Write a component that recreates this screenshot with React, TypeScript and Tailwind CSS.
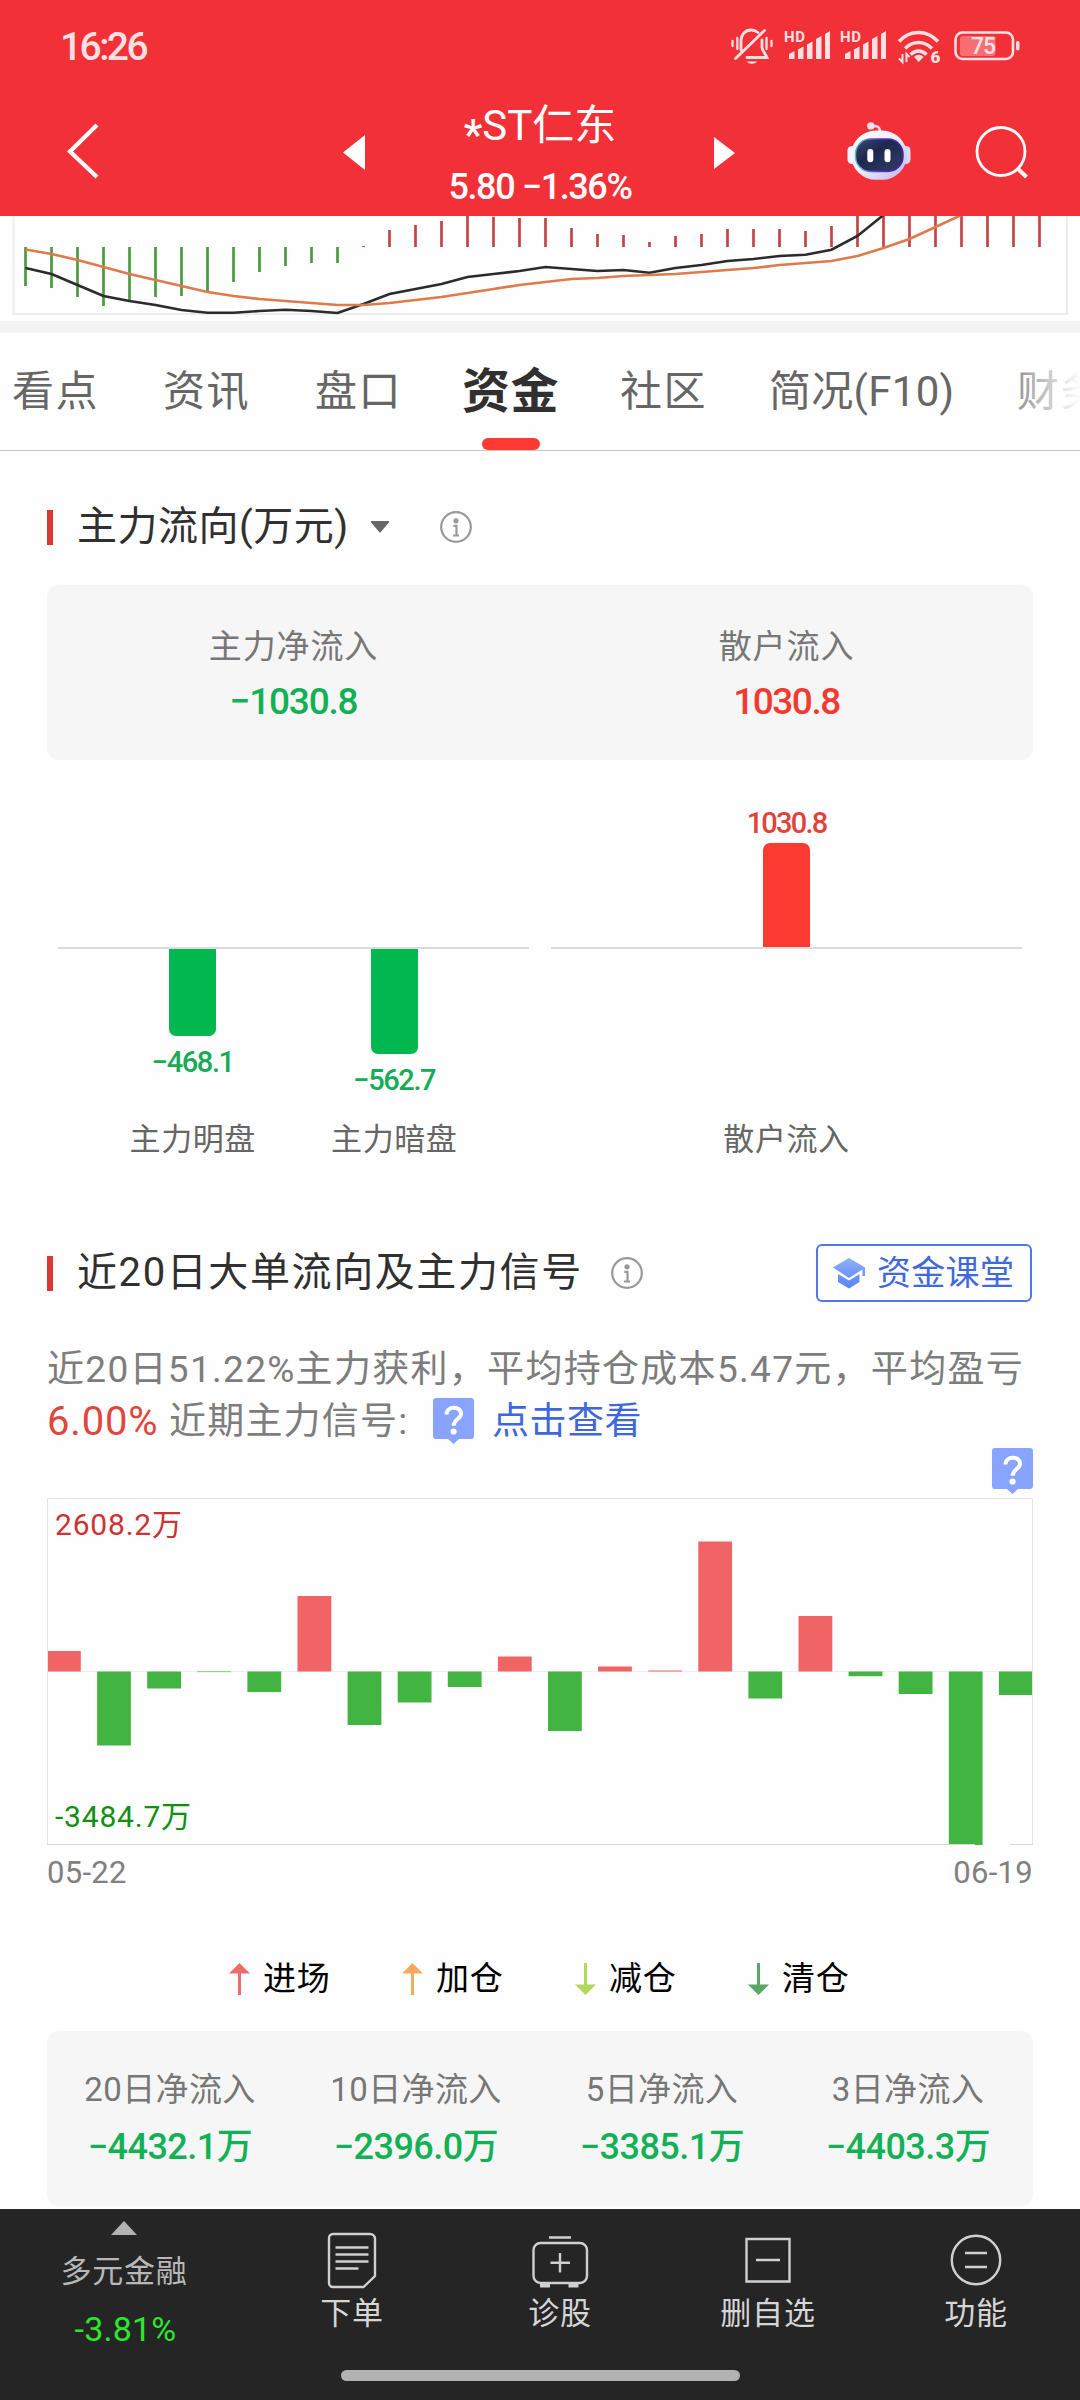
import type { ReactNode } from 'react';

// MACD histogram, zero line at y = 31 of the visible strip
const macdEnds = [
  70, 72, 81, 90, 84, 81, 80, 75, 66, 56, 50, 47, 47, 30, 14, 9, 5, 0, 0.7, 2,
  2, 12, 18, 19, 26, 20, 18, 13, 13, 13, 15, 10, 0, 0, 0, 0, 0, 0, 0, 0,
];
const difLine = [
  52, 58, 69, 80, 85, 89, 94, 96.7, 96.7, 95, 93.7, 95, 97, 88, 78, 73, 68, 61, 58, 55,
  51, 53, 55, 54, 56.7, 52, 49, 45, 43, 40, 38.7, 33.7, 20, -1,
];
const deaLine = [
  33.5, 38, 44, 51, 58, 64, 70, 76, 80, 83, 85, 87, 89, 89, 87, 84, 81, 77, 73, 69,
  66, 63, 62, 60, 59, 58, 56, 54, 52, 49, 47, 45, 40, 32, 23, 11, -1,
];

const macdX = (i: number) => 25.5 + i * 26;
const toPoints = (ys: number[]) => ys.map((y, i) => `${macdX(i)},${y}`).join(' ');

// bar heights in px, positive = inflow
const dailyFlow = [
  20.5, -74, -17, -0.6, -20.5, 75.5, -53.5, -31, -15.5, 15, -59.5, 5, 1, 130, -27, 55.5, -4.7, -22.5, -173.5, -23.5,
];

const summary = [
  { label: '20日净流入', value: '−4432.1' },
  { label: '10日净流入', value: '−2396.0' },
  { label: '5日净流入', value: '−3385.1' },
  { label: '3日净流入', value: '−4403.3' },
];

const legend = [
  { label: '进场', color: '#ee6b6b', up: true },
  { label: '加仓', color: '#f9a95f', up: true },
  { label: '减仓', color: '#b0d95a', up: false },
  { label: '清仓', color: '#5aa765', up: false },
];

function SignalBars() {
  return (
    <svg className="overflow-visible" width="46" height="30" viewBox="0 0 46 30" fill="#fde0e1">
      <text x="0" y="12" fontSize="15" fontWeight="700" fontFamily="Roboto, sans-serif" textLength="21">HD</text>
      <path d="M5 29v-5l5.5-3v8zM14 29V19.500l5.500-3V29zM23 29V14.500l5.500-3V29zM32 29V9l5.500-3v23zM41 29V4l5-3v28z" />
    </svg>
  );
}

function StatusBar() {
  return (
    <div className="flex h-[84px] items-start pl-[60px] pr-[60px] pt-[28px] text-[#fde0e1]">
      <span className="mr-auto mt-[-2px] text-[39px] font-medium leading-[42px] tracking-[-2.6px]">16:26</span>
      <svg className="mr-[11px]" width="42" height="37" viewBox="0 0 42 37" fill="none" stroke="#fde0e1" strokeWidth="2.8" strokeLinecap="round">
        <path d="M4.500 30.500 33.500 2.500M10 22v-8C10 6 14.500 2 20 2c3 0 5 1 7 2.500M31 12v7c0 4 2.500 5 5 10.500H16" />
        <path d="M1.500 13v5M6.300 10v11M35.500 10v11M40.500 13v5" strokeWidth="2.300" />
        <path d="M16 33.500h10c-1.500 3-8.500 3-10 0z" fill="#fde0e1" stroke="none" />
      </svg>
      <div className="mt-[2px]"><SignalBars /></div>
      <div className="ml-[10px] mt-[2px]"><SignalBars /></div>
      <svg className="ml-[12px] mt-[2px] overflow-visible" width="45" height="34" viewBox="0 0 45 34" fill="none" stroke="#fde0e1" strokeWidth="3.600">
        <path d="M1 11.500C12-.5 29-.5 40 11.500M7 18.500c8-8 19-8 27 0M12.500 24.500c5-4.500 11-4.500 16 0" />
        <path d="M16 27c3-3 6.500-3 9.500 0l-4.700 5z" fill="#fde0e1" stroke="none" />
        <path d="M4.500 24v8L1 28.500M8.500 32v-8l3 3" strokeWidth="2" />
        <text x="32.500" y="33" fontSize="17" fontWeight="900" fill="#fde0e1" stroke="none" fontFamily="Roboto, sans-serif">6</text>
      </svg>
      <svg className="ml-[11px] mt-[3px]" width="66" height="30" viewBox="0 0 66 30">
        <rect x="1.500" y="1.500" width="57.500" height="26.500" rx="7" fill="none" stroke="#fde0e1" strokeWidth="2.600" />
        <rect x="6" y="5" width="35.500" height="20" rx="3" fill="#f76e73" />
        <rect x="62" y="10" width="3.500" height="9.500" rx="1.700" fill="#fde0e1" />
        <text x="17" y="23" fontSize="23" fontWeight="500" fill="#fde0e1" fontFamily="Roboto, sans-serif" textLength="25">75</text>
      </svg>
    </div>
  );
}

function Robot() {
  return (
    <svg width="64" height="58" viewBox="0 0 64 58">
      <defs>
        <linearGradient id="robotHead" x1="0" y1="0" x2="1" y2="1">
          <stop offset="0" stopColor="#ffffff" />
          <stop offset="0.45" stopColor="#f1effc" />
          <stop offset="1" stopColor="#b9b4ee" />
        </linearGradient>
        <linearGradient id="robotFace" x1="0" y1="0" x2="1" y2="1">
          <stop offset="0" stopColor="#3c4a73" />
          <stop offset="0.4" stopColor="#1d2750" />
          <stop offset="1" stopColor="#363d63" />
        </linearGradient>
        <linearGradient id="robotRim" x1="0" y1="0" x2="1" y2="0">
          <stop offset="0" stopColor="#5fb9c8" />
          <stop offset="0.5" stopColor="#5a2fd0" />
          <stop offset="1" stopColor="#3a22b0" />
        </linearGradient>
      </defs>
      <path d="M24 4.500c6-1.500 9 .5 9 5" fill="none" stroke="#e3dcf6" strokeWidth="2.400" />
      <circle cx="23.800" cy="3.900" r="3.700" fill="#f1dff0" />
      <rect x="0.500" y="24" width="9" height="18" rx="4.500" fill="#f7f4fd" />
      <rect x="54.500" y="24" width="9" height="18" rx="4.500" fill="#dcd7f5" />
      <rect x="4" y="8.500" width="56" height="49.300" rx="25" fill="url(#robotHead)" />
      <rect x="8.500" y="17" width="47.500" height="32.500" rx="15" fill="url(#robotFace)" stroke="url(#robotRim)" strokeWidth="1.400" />
      <rect x="20.300" y="27" width="6" height="13.300" rx="3" fill="#fff" />
      <rect x="37.500" y="27" width="6" height="13.300" rx="3" fill="#fff" />
    </svg>
  );
}

function NavBar() {
  return (
    <div className="flex h-[132px] items-start text-white">
      <svg className="ml-[66px] mt-[38px]" width="34" height="58" viewBox="0 0 34 58">
        <path d="M31 3 4 29.500 31 55" fill="none" stroke="#fff" strokeWidth="4.200" />
      </svg>
      <svg className="ml-[243px] mt-[51px]" width="22" height="35" viewBox="0 0 22 35" fill="#fff">
        <path d="M22 0v35L0 17.500z" />
      </svg>
      <div className="ml-[53px] flex w-[244px] flex-col items-center">
        <div className="mt-[16px] whitespace-nowrap text-[42px] leading-[52px]">
          <span className="inline-block translate-y-[9px] font-medium">*</span>ST仁东
        </div>
        <div className="mt-[9px] whitespace-nowrap text-[36px] font-medium leading-[52px] tracking-[-1.4px]">5.80 −1.36%</div>
      </div>
      <svg className="ml-[52px] mt-[53px]" width="21" height="32" viewBox="0 0 21 32" fill="#fff">
        <path d="M0 0v32l21-16z" />
      </svg>
      <div className="ml-[112px] mt-[38px]"><Robot /></div>
      <svg className="ml-[64px] mt-[41px]" width="54" height="54" viewBox="0 0 54 54" fill="none" stroke="#fff" strokeWidth="2.800">
        <circle cx="26" cy="26.500" r="24" />
        <path d="m42.500 43.500 9 8.500" strokeWidth="4" />
      </svg>
    </div>
  );
}

function MacdStrip() {
  return (
    <svg className="block" width="1080" height="105" viewBox="0 0 1080 105" fill="none">
      <path d="M13.500 0v98H1067V0" stroke="#ececec" strokeWidth="2" />
      {macdEnds.map((y, i) => (
        <path key={i} d={`M${macdX(i)} 31V${y}`} stroke={i < 13 ? '#4c9a3f' : '#c24447'} strokeWidth="2.700" />
      ))}
      <polyline points={toPoints(difLine)} stroke="#2b2b2b" strokeWidth="2.600" />
      <polyline points={toPoints(deaLine)} stroke="#df7a4c" strokeWidth="2.700" />
    </svg>
  );
}

function Tabs() {
  return (
    <div className="relative h-[118px] overflow-hidden border-b border-[#c8c8c8]">
      <div className="flex h-[117px] items-center whitespace-nowrap pl-[12px] text-[42px] tracking-[1.6px] text-[#666] *:shrink-0">
        <span className="w-[151px]">看点</span>
        <span className="w-[152px]">资讯</span>
        <span className="w-[147px]">盘口</span>
        <span className="w-[158px] text-[48px] font-bold tracking-[0.500px] text-[#303030]">资金</span>
        <span className="w-[149px]">社区</span>
        <span className="w-[248px] tracking-[0.300px]">简况(F10)</span>
        <span>财务</span>
      </div>
      <div className="absolute bottom-0 left-[482px] h-[12px] w-[58px] rounded-full bg-[#fc3a32]" />
      <div className="absolute right-0 top-0 h-[116px] w-[72px] bg-linear-to-r from-white/20 to-white" />
    </div>
  );
}

function InfoIcon() {
  return (
    <svg width="32" height="32" viewBox="0 0 32 32" fill="none" stroke="#999" strokeWidth="2.200">
      <circle cx="16" cy="16" r="14.800" />
      <circle cx="16" cy="9.800" r="2.600" fill="#999" stroke="none" />
      <path d="M13.300 14.800h3.200v9.500M13 24.500h6" />
    </svg>
  );
}

function SectionTitle({ children }: { children: ReactNode }) {
  return (
    <>
      <div className="h-[35px] w-[6px] bg-[#d93636]" />
      <h2 className="ml-[24px] whitespace-nowrap text-[40px] leading-[58px] text-[#303030]">{children}</h2>
    </>
  );
}

function FlowColumn({ value, label, height, width }: { value: string; label: string; height: number; width: string }) {
  const inflow = height > 0;
  return (
    <div className={`flex flex-col items-center ${width}`}>
      <div className="flex h-[187px] flex-col items-center justify-end">
        {inflow && (
          <>
            <span className="mb-[3px] text-[29px] font-medium leading-[34px] tracking-[-1.800px] text-[#e0433a]">{value}</span>
            <div className="w-[47px] rounded-t-[7px] bg-[#fc3a32]" style={{ height }} />
          </>
        )}
      </div>
      <div className="flex h-[174px] flex-col items-center pt-[2px]">
        {!inflow && (
          <>
            <div className="w-[47px] rounded-b-[7px] bg-[#00b750]" style={{ height: -height }} />
            <span className="mt-[9px] text-[29px] font-medium leading-[34px] tracking-[-1.400px] text-[#16ab56]">{value}</span>
          </>
        )}
      </div>
      <span className="whitespace-nowrap text-[31px] leading-[38px] tracking-[0.600px] text-[#666]">{label}</span>
    </div>
  );
}

function QuestionBadge() {
  return (
    <svg width="41" height="46" viewBox="0 0 41 46">
      <path d="M3 0h35a3 3 0 0 1 3 3v35a3 3 0 0 1-3 3H26l-5.500 5-5.500-5H3a3 3 0 0 1-3-3V3a3 3 0 0 1 3-3z" fill="#88a4ff" />
      <path d="M13.500 16.500c0-9 14.500-9 14.500-.8 0 5.500-7.300 5.300-7.300 12" fill="none" stroke="#fff" strokeWidth="4" />
      <circle cx="20.600" cy="33.500" r="3.100" fill="#fff" />
    </svg>
  );
}

function DailyFlowChart() {
  return (
    <div className="relative">
      <svg className="block" width="986" height="347" viewBox="0 0 986 347">
        <path d="M0 173.500h986" stroke="#eee" />
        {dailyFlow.map((v, i) => (
          <rect
            key={i}
            x={i * 50.1}
            y={v > 0 ? 173.500 - v : 173.500}
            width="33.800"
            height={Math.abs(v)}
            fill={v > 0 ? '#f06466' : '#42b442'}
          />
        ))}
        <path d="M.5 347V.5h985V347" fill="none" stroke="#e6e6e6" />
        <path d="M0 346.500h928M963 346.500h23" stroke="#d6d6d6" />
      </svg>
      <span className="absolute left-[8px] top-[10px] text-[30px] leading-[34px] tracking-[0.800px] text-[#cc3333]">2608.2万</span>
      <span className="absolute bottom-[11px] left-[8px] text-[30px] leading-[34px] tracking-[0.800px] text-[#108f10]">-3484.7万</span>
    </div>
  );
}

function TabItem({ label, children }: { label: string; children: ReactNode }) {
  return (
    <div className="flex w-[208px] flex-col items-center">
      <svg className="mt-[22px]" width="60" height="60" viewBox="0 0 60 60" fill="none" stroke="#d0d0d0" strokeWidth="2.400">
        {children}
      </svg>
      <span className="mt-[3px] text-[31px] leading-[40px] tracking-[0.800px] text-[#d6d6d6]">{label}</span>
    </div>
  );
}

function BottomBar() {
  return (
    <div className="h-[191px] bg-[#252525]">
      <div className="flex h-[161px]">
        <div className="flex w-[248px] flex-col items-center">
          <svg className="mt-[12px]" width="26" height="14" viewBox="0 0 26 14" fill="#b2b2b2">
            <path d="M13 0 26 14H0z" />
          </svg>
          <span className="mt-[17px] text-[31px] leading-[40px] tracking-[0.800px] text-[#b8b8b8]">多元金融</span>
          <span className="mt-[17px] pl-[3px] text-[34px] leading-[40px] tracking-[0.200px] text-[#2fe62f]">-3.81%</span>
        </div>
        <TabItem label="下单">
          <path d="M11 3h37a5 5 0 0 1 5 5v37L41.500 56H11a4 4 0 0 1-4-4V7a4 4 0 0 1 4-4z" />
          <path d="M13.500 16.500h33M13.500 23.500h33M13.500 30.500h33M13.500 37.500h23" />
        </TabItem>
        <TabItem label="诊股">
          <rect x="3.500" y="12" width="53.500" height="40" rx="7" />
          <path d="M19 6.500h22M30 22v19.500M20.500 31.800h19.500" />
          <path d="M10 54.500h10M38.500 54.500h10" strokeWidth="4" />
        </TabItem>
        <TabItem label="删自选">
          <path d="M8.500 8h43v42.500h-43zM18 29h24" />
        </TabItem>
        <TabItem label="功能">
          <circle cx="30" cy="29" r="24.200" />
          <path d="M19 22h22M19 36h22" />
        </TabItem>
      </div>
      <div className="mx-auto h-[11px] w-[399px] rounded-full bg-[#b2b2b2]" />
    </div>
  );
}

export default function App() {
  return (
    <div className="flex h-[2400px] w-[1080px] flex-col overflow-hidden bg-[#fefefe] font-[Roboto,'Noto_Sans_CJK_SC',sans-serif]">
      <header className="bg-[#f23038]">
        <StatusBar />
        <NavBar />
      </header>
      <MacdStrip />
      <div className="h-[12px] bg-[#f4f4f4]" />
      <Tabs />

      <main className="flex h-[1758px] flex-col px-[47px]">
        <div className="mt-[46px] flex h-[60px] items-center tracking-[0.500px]">
          <SectionTitle>主力流向(万元)</SectionTitle>
          <svg className="ml-[21px]" width="20" height="12" viewBox="0 0 20 12">
            <path d="M1.500.8h17L10 10.700z" fill="#666" stroke="#666" strokeWidth="1.500" strokeLinejoin="round" />
          </svg>
          <div className="ml-[50px]"><InfoIcon /></div>
        </div>

        <div className="mt-[28px] flex h-[175px] rounded-[12px] bg-[#f6f6f6] pt-[38px] text-center">
          <div className="flex-1">
            <div className="text-[33px] leading-[48px] tracking-[0.900px] text-[#777]">主力净流入</div>
            <div className="mt-[5px] text-[37px] font-medium leading-[52px] tracking-[-1.200px] text-[#12b155]">−1030.8</div>
          </div>
          <div className="flex-1">
            <div className="text-[33px] leading-[48px] tracking-[0.900px] text-[#777]">散户流入</div>
            <div className="mt-[5px] text-[37px] font-medium leading-[52px] tracking-[-1.500px] text-[#f23a32]">1030.8</div>
          </div>
        </div>

        {/* net flow split: main force on the left, retail on the right */}
        <div className="flex h-[452px] gap-[22px] px-[11px]">
          <div className="w-[471px]">
            <div className="flex bg-[linear-gradient(#dcdcdc,#dcdcdc)] bg-[length:100%_2px] bg-[position:0_187px] bg-no-repeat px-[34px]">
              <FlowColumn value="−468.1" label="主力明盘" height={-87} width="w-[202px]" />
              <FlowColumn value="−562.7" label="主力暗盘" height={-105} width="w-[202px]" />
            </div>
          </div>
          <div className="w-[471px]">
            <div className="flex bg-[linear-gradient(#dcdcdc,#dcdcdc)] bg-[length:100%_2px] bg-[position:0_187px] bg-no-repeat">
              <FlowColumn value="1030.8" label="散户流入" height={104} width="w-full" />
            </div>
          </div>
        </div>

        <div className="mt-[31px] flex h-[60px] items-center">
          <div className="flex items-center tracking-[1.600px]">
            <SectionTitle>近20日大单流向及主力信号</SectionTitle>
          </div>
          <div className="ml-[28px]"><InfoIcon /></div>
          <div className="ml-auto mr-px flex h-[58px] w-[216px] items-center rounded-[6px] border-2 border-[#4f78e6] pl-[15px]">
            <svg width="33" height="31" viewBox="0 0 33 31">
              <defs>
                <linearGradient id="cap" x1="0" y1="0" x2="0" y2="1">
                  <stop offset="0" stopColor="#8fb0fb" />
                  <stop offset="1" stopColor="#5583f5" />
                </linearGradient>
              </defs>
              <path d="M16 0 0 9.500 16 20l13.500-8.500V18h2.500V9.500zM5 16v8l11 6.500L26.500 24v-8L16 22.500z" fill="url(#cap)" />
            </svg>
            <span className="ml-[11px] whitespace-nowrap text-[34px] leading-[48px] tracking-[0.300px] text-[#4169dc]">资金课堂</span>
          </div>
        </div>

        <div className="mt-[41px] whitespace-nowrap text-[37px] text-[#7d7d7d]">
          <div className="h-[52px] leading-[52px] tracking-[1.300px]">近20日51.22%主力获利，平均持仓成本5.47元，平均盈亏</div>
          <div className="flex h-[52px] leading-[52px]">
            <span className="w-[122px] text-[40px] tracking-[0.800px] text-[#e0463c]">6.00%</span>
            <span className="w-[264px] tracking-[1.200px]">近期主力信号:</span>
            <div className="mt-[2px] w-[59px]"><QuestionBadge /></div>
            <span className="tracking-[0.500px] text-[#3d66df]">点击查看</span>
          </div>
        </div>

        <div className="flex h-[50px] shrink-0 justify-end"><QuestionBadge /></div>
        <DailyFlowChart />
        <div className="mt-[10px] flex justify-between text-[31px] leading-[36px] tracking-[0.300px] text-[#808080]">
          <span>05-22</span>
          <span>06-19</span>
        </div>

        <div className="mt-[64px] flex h-[48px] justify-center gap-[73px] pr-[3px] text-black">
          {legend.map((item) => (
            <div key={item.label} className="flex w-[100px] shrink-0 items-center whitespace-nowrap text-[33px] tracking-[0.800px]">
              <svg className={item.up ? 'shrink-0' : 'shrink-0 rotate-180'} width="21" height="32" viewBox="0 0 21 32">
                <path d="M10.500 0 21 10.500h-9V32H9V10.500H0z" fill={item.color} />
              </svg>
              <span className="ml-[13px]">{item.label}</span>
            </div>
          ))}
        </div>

        <div className="mt-[28px] grid h-[175px] shrink-0 grid-cols-4 rounded-[12px] bg-[#f6f6f6] pr-[2px] pt-[35px] text-center">
          {summary.map((item) => (
            <div key={item.label}>
              <div className="text-[33px] leading-[48px] tracking-[0.400px] text-[#777]">{item.label}</div>
              <div className="mt-[7px] whitespace-nowrap text-[36px] font-medium leading-[52px] tracking-[-0.500px] text-[#12b155]">{item.value}万</div>
            </div>
          ))}
        </div>
      </main>

      <BottomBar />
    </div>
  );
}
